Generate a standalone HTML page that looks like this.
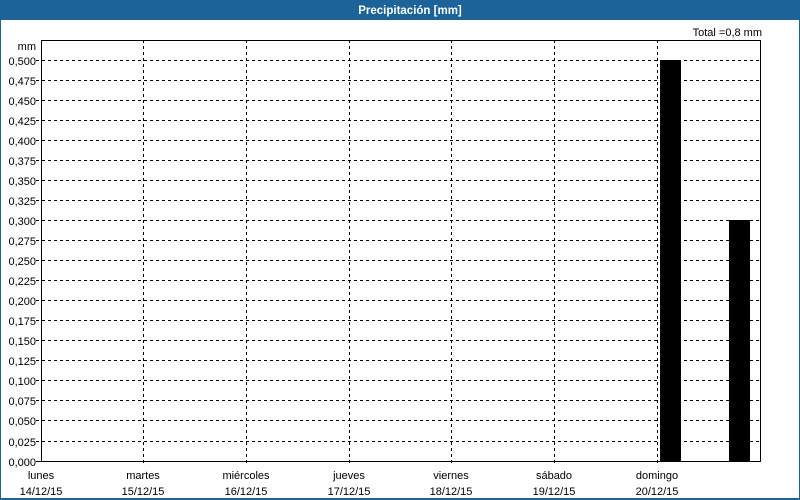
<!DOCTYPE html>
<html><head><meta charset="utf-8"><style>
html,body{margin:0;padding:0;background:#fff}
svg{display:block}
text{font-family:"Liberation Sans",sans-serif;font-size:11px;fill:#000}
</style></head><body>
<svg width="800" height="500" xmlns="http://www.w3.org/2000/svg">
<rect x="0" y="0" width="800" height="500" fill="#fdfefd"/>
<rect x="0" y="0" width="800" height="20" fill="#1c6399"/>
<rect x="0" y="0" width="1" height="500" fill="#1c6399"/>
<rect x="799" y="0" width="1" height="500" fill="#1c6399"/>
<rect x="0" y="498" width="800" height="2" fill="#1c6399"/>
<text x="410" y="14" text-anchor="middle" style="font-weight:bold;fill:#fff;font-size:11.5px">Precipitación [mm]</text>
<text x="762" y="36" text-anchor="end">Total =0,8 mm</text>
<text x="36" y="50" text-anchor="end">mm</text>
<g stroke="#000" stroke-width="1" stroke-dasharray="3,3" shape-rendering="crispEdges">
<path d="M36 60.5H760M36 80.5H760M36 100.5H760M36 120.5H760M36 140.5H760M36 160.5H760M36 180.5H760M36 200.5H760M36 220.5H760M36 240.5H760M36 260.5H760M36 280.5H760M36 300.5H760M36 320.5H760M36 340.5H760M36 360.5H760M36 380.5H760M36 400.5H760M36 420.5H760M36 441.5H760"/>
<path d="M143.5 40V466M246.5 40V466M349.5 40V466M451.5 40V466M554.5 40V466M657.5 40V466"/>
</g>
<rect x="660" y="60" width="21" height="401" fill="#000"/>
<rect x="729" y="220" width="21" height="241" fill="#000"/>
<g stroke="#000" stroke-width="1" fill="none" shape-rendering="crispEdges">
<path d="M41.5 40.5H760.5V461.5H41.5Z"/>
<path d="M36 461.5H41"/>
</g>
<g text-anchor="end">
<text x="36" y="65">0,500</text><text x="36" y="85">0,475</text><text x="36" y="105">0,450</text><text x="36" y="125">0,425</text><text x="36" y="145">0,400</text><text x="36" y="165">0,375</text><text x="36" y="185">0,350</text><text x="36" y="205">0,325</text><text x="36" y="225">0,300</text><text x="36" y="245">0,275</text><text x="36" y="265">0,250</text><text x="36" y="285">0,225</text><text x="36" y="305">0,200</text><text x="36" y="325">0,175</text><text x="36" y="345">0,150</text><text x="36" y="365">0,125</text><text x="36" y="385">0,100</text><text x="36" y="405">0,075</text><text x="36" y="425">0,050</text><text x="36" y="446">0,025</text><text x="36" y="466">0,000</text>
</g>
<g text-anchor="middle">
<text x="41" y="479">lunes</text><text x="41" y="495">14/12/15</text>
<text x="143" y="479">martes</text><text x="143" y="495">15/12/15</text>
<text x="246" y="479">miércoles</text><text x="246" y="495">16/12/15</text>
<text x="349" y="479">jueves</text><text x="349" y="495">17/12/15</text>
<text x="451" y="479">viernes</text><text x="451" y="495">18/12/15</text>
<text x="554" y="479">sábado</text><text x="554" y="495">19/12/15</text>
<text x="657" y="479">domingo</text><text x="657" y="495">20/12/15</text>
</g>
</svg>
</body></html>
